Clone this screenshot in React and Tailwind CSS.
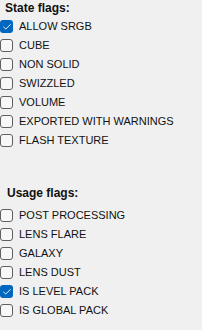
import { Check } from "lucide-react";

// ===== Flag data =====
const stateFlags = [
    { label: "ALLOW SRGB", checked: true },
    { label: "CUBE", checked: false },
    { label: "NON SOLID", checked: false },
    { label: "SWIZZLED", checked: false },
    { label: "VOLUME", checked: false },
    { label: "EXPORTED WITH WARNINGS", checked: false },
    { label: "FLASH TEXTURE", checked: false },
];

const usageFlags = [
    { label: "POST PROCESSING", checked: false },
    { label: "LENS FLARE", checked: false },
    { label: "GALAXY", checked: false },
    { label: "LENS DUST", checked: false },
    { label: "IS LEVEL PACK", checked: true },
    { label: "IS GLOBAL PACK", checked: false },
];

// ===== Checkbox row =====
const FlagRow = ({ label, checked }) => (
    <label className="flex items-center h-[19px] gap-[6px]">
        {checked ? (
            <span className="w-[13px] h-[13px] rounded-[3px] bg-[#0067c0] flex items-center justify-center">
                <Check size={10} strokeWidth={2.2} className="text-white" />
            </span>
        ) : (
            <span className="w-[13px] h-[13px] rounded-[3px] border border-[#5f5f5f] bg-[#f7f7f7]" />
        )}
        <span className="text-[11px] leading-[19px] text-[#111]">{label}</span>
    </label>
);

export default function App() {
    return (
        <div
            className="w-[202px] h-[330px] bg-[#f0f0f0] overflow-hidden"
            style={{ fontFamily: '"Liberation Sans", Arial, sans-serif' }}
        >
            <h2 className="pl-[5px] pt-[1px] text-[12px] leading-[14px] font-bold text-[#111] mb-[2px]">
                State flags:
            </h2>
            <div className="flex flex-col">
                {stateFlags.map((f) => (
                    <FlagRow key={f.label} {...f} />
                ))}
            </div>
            <h2 className="pl-[7px] mt-[36px] text-[12px] leading-[14px] font-bold text-[#111] mb-[6px]">
                Usage flags:
            </h2>
            <div className="flex flex-col">
                {usageFlags.map((f) => (
                    <FlagRow key={f.label} {...f} />
                ))}
            </div>
        </div>
    );
}
